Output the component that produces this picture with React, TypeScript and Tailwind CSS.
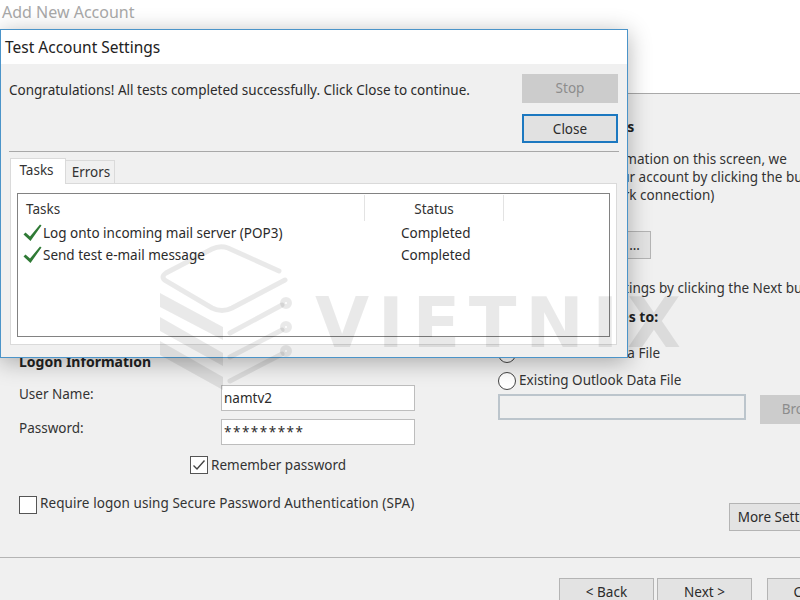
import React from "react";

function Btn({ children, className = "" }: { children: React.ReactNode; className?: string }) {
  return (
    <div className={`flex shrink-0 items-center justify-center border border-[#b4b4b4] bg-[#e3e3e3] text-[13.5px] text-[#2b2b2b] whitespace-nowrap ${className}`}>
      {children}
    </div>
  );
}

function Check() {
  return (
    <svg width="19" height="18" viewBox="0 0 19 18" className="shrink-0">
      <path d="M0.5 10.5 L2.5 8.5 L7 12.5 L17 0.5 L18.5 1.5 L7.5 17 Z" fill="#2f7a35" />
    </svg>
  );
}

function TaskRow({ label }: { label: string }) {
  return (
    <div className="flex h-[22px] items-center pl-[5px] text-[13.5px] text-[#2b2b2b]">
      <Check />
      <span className="ml-[1px] w-[358px] whitespace-nowrap">{label}</span>
      <span>Completed</span>
    </div>
  );
}

function Dialog() {
  return (
    <div className="absolute left-0 top-[29px] flex h-[329px] w-[628px] flex-col border border-[#4b94c9] bg-[#f0f0f0] shadow-[0_4px_22px_rgba(0,0,0,0.3)]">
      <div className="flex h-[34px] items-center bg-white pl-[4px] pt-[2px] text-[15.5px] text-[#222]">Test Account Settings</div>
      <div className="mx-[8px] flex h-[88px] justify-between border-b border-[#a8a8a8] pr-[1px] pt-[10px]">
        <div className="pt-[6px] text-[13.5px] text-[#2b2b2b] whitespace-nowrap">
          Congratulations! All tests completed successfully. Click Close to continue.
        </div>
        <div className="flex flex-col gap-[11px]">
          <div className="flex h-[29px] w-[96px] items-center justify-center bg-[#cccccc] text-[13.5px] text-[#8c8c8c]">Stop</div>
          <div className="flex h-[29px] w-[96px] items-center justify-center border-2 border-[#1c78c0] bg-[#e1e1e1] pt-[1px] text-[13.5px] text-[#2b2b2b]">Close</div>
        </div>
      </div>
      <div className="mx-[9px] mt-[6px] flex h-[26px] items-end">
        <div className="z-10 flex h-[26px] w-[56px] items-center justify-center border border-b-0 border-[#dadada] bg-white pb-[2px] pr-[3px] text-[13.5px] text-[#333]">Tasks</div>
        <div className="flex h-[24px] w-[49px] items-center justify-center border border-b-0 border-l-0 border-[#dadada] bg-[#f0f0f0] pl-[2px] text-[13.5px] text-[#333]">Errors</div>
      </div>
      <div className="mx-[9px] -mt-[1px] h-[162px] w-[607px] border border-[#dadada] bg-white pl-[6px] pt-[9px]">
        <div className="h-[144px] w-[593px] border border-[#828282] bg-white">
          <div className="flex h-[28px] items-center text-[13.5px] text-[#333]">
            <div className="flex h-[26px] w-[347px] items-center border-r border-[#e3e3e3] pl-[8px] pt-[2px]">Tasks</div>
            <div className="flex h-[26px] w-[139px] items-center justify-center border-r border-[#e3e3e3] pt-[2px]">Status</div>
          </div>
          <TaskRow label="Log onto incoming mail server (POP3)" />
          <TaskRow label="Send test e-mail message" />
        </div>
      </div>
    </div>
  );
}

function Watermark() {
  return (
    <>
      <svg className="pointer-events-none absolute left-[155px] top-[240px] z-20" width="140" height="155" viewBox="155 240 140 155" fill="none">
        <g stroke="#000" strokeOpacity="0.085" strokeWidth="5" strokeLinecap="round">
          <path d="M279 271 L228 248 Q220 245 212 249 L166 273 Q160 277 166 281 L212 308 Q222 313 232 308 L285 280" />
          <path d="M230 333 L282 305 M230 357 L282 330 M230 381 L282 354" />
          <circle cx="286" cy="303" r="3.5" />
          <circle cx="286" cy="327" r="3.5" />
          <circle cx="286" cy="351" r="3.5" />
        </g>
        <g fill="#000" fillOpacity="0.085">
          <path d="M160 293 L223 327 L223 340 L160 307 Z" />
          <path d="M160 317 L223 353 L223 366 L160 331 Z" />
          <path d="M160 341 L223 377 L223 390 L160 355 Z" />
        </g>
      </svg>
      <div className="pointer-events-none absolute left-[315px] top-[282px] z-20 font-['DejaVu_Sans',sans-serif] text-[70px] font-bold leading-[83px] tracking-[8.6px] text-black/[0.085]">
        VIETNIX
      </div>
    </>
  );
}

function Field({ label, value, className = "", valueClass = "" }: { label: string; value: string; className?: string; valueClass?: string }) {
  return (
    <div className={`flex items-center ${className}`}>
      <div className="w-[202px] -translate-y-[4px] text-[13.5px] text-[#333]">{label}</div>
      <div className={`flex h-[26px] w-[194px] items-center border border-[#bdbdbd] bg-white pl-[2px] text-[13.5px] text-[#2b2b2b] ${valueClass}`}>{value}</div>
    </div>
  );
}

function Box({ checked }: { checked?: boolean }) {
  return (
    <div className="flex h-[18px] w-[18px] shrink-0 items-center justify-center border border-[#555] bg-white">
      {checked && (
        <svg width="14" height="12" viewBox="0 0 14 12" fill="none">
          <path d="M1.5 6.5 L5 10 L12.5 1.5" stroke="#444" strokeWidth="1.4" />
        </svg>
      )}
    </div>
  );
}

function Radio({ label }: { label: string }) {
  return (
    <div className="flex h-[27px] items-center gap-[3px] text-[13.5px] text-[#333] whitespace-nowrap">
      <div className="h-[18px] w-[18px] shrink-0 rounded-full border border-[#444] bg-white" />
      {label}
    </div>
  );
}

export default function App() {
  return (
    <div className="relative h-[600px] w-[800px] overflow-hidden bg-[#f0f0f0] font-['Noto_Sans',sans-serif]">
      <div className="h-[94px] border-b border-[#a9a9a9] bg-white pl-[2px] pt-[1px] text-[16px] leading-[23px] text-[#a8a8a8]">
        Add New Account
      </div>
      <div className="flex h-[463px]">
        <div className="w-[498px] shrink-0 pl-[19px] pt-[258px]">
          <div className="h-[20px] text-[14px] font-bold leading-[20px] text-[#222]">Logon Information</div>
          <Field label="User Name:" value="namtv2" className="mt-[13px]" />
          <Field label="Password:" value="*********" className="mt-[8px]" valueClass="tracking-[1.5px]" />
          <div className="mt-[11px] flex h-[18px] items-center gap-[3px] pl-[171px] text-[13.5px] text-[#333]">
            <Box checked />
            Remember password
          </div>
          <div className="mt-[22px] flex h-[18px] items-center gap-[3px] text-[13.5px] text-[#333] whitespace-nowrap">
            <Box />
            <span className="-translate-y-[2px] tracking-[0.07px]">Require logon using Secure Password Authentication (SPA)</span>
          </div>
        </div>
        <div className="flex w-[302px] shrink-0 flex-col pt-[23px] text-[13.5px] text-[#333] whitespace-nowrap">
          <div className="-ml-[14px] h-[20px] text-[14px] font-bold leading-[20px] text-[#222]">Test Account Settings</div>
          <div className="mt-[13px] leading-[18px]">
            <div>Enter all of the information on this screen, we</div>
            <div>suggest you test your account by clicking the button</div>
            <div className="ml-[23px]">(Requires network connection)</div>
          </div>
          <Btn className="mt-[27px] h-[28px] w-[153px] !justify-end pr-[10px]">Test Account Settings ...</Btn>
          <div className="mt-[19px] h-[20px] leading-[20px]">Test the account settings by clicking the Next button</div>
          <div className="-ml-[17px] mt-[9px] h-[20px] text-[14px] font-bold leading-[20px] text-[#222]">Deliver new messages to:</div>
          <div className="mt-[13px]">
            <Radio label="New Outlook Data File" />
            <Radio label="Existing Outlook Data File" />
          </div>
          <div className="flex items-start gap-[14px]">
            <div className="h-[26px] w-[248px] shrink-0 border-2 border-[#bcc5cc] bg-[#f0f0f0]" />
            <div className="mt-[1px] flex h-[29px] w-[90px] shrink-0 items-center justify-center bg-[#cccccc] text-[#8c8c8c]">Browse</div>
          </div>
          <Btn className="ml-[231px] mt-[79px] h-[28px] w-[120px]">More Settings ...</Btn>
        </div>
      </div>
      <div className="flex h-[43px] gap-[3px] border-t border-[#b4b4b4] pl-[559px] pt-[20px]">
        <Btn className="h-[29px] w-[95px]">&lt; Back</Btn>
        <Btn className="h-[29px] w-[95px]">Next &gt;</Btn>
        <Btn className="ml-[12px] h-[29px] w-[95px]">Cancel</Btn>
      </div>
      <Dialog />
      <Watermark />
    </div>
  );
}
